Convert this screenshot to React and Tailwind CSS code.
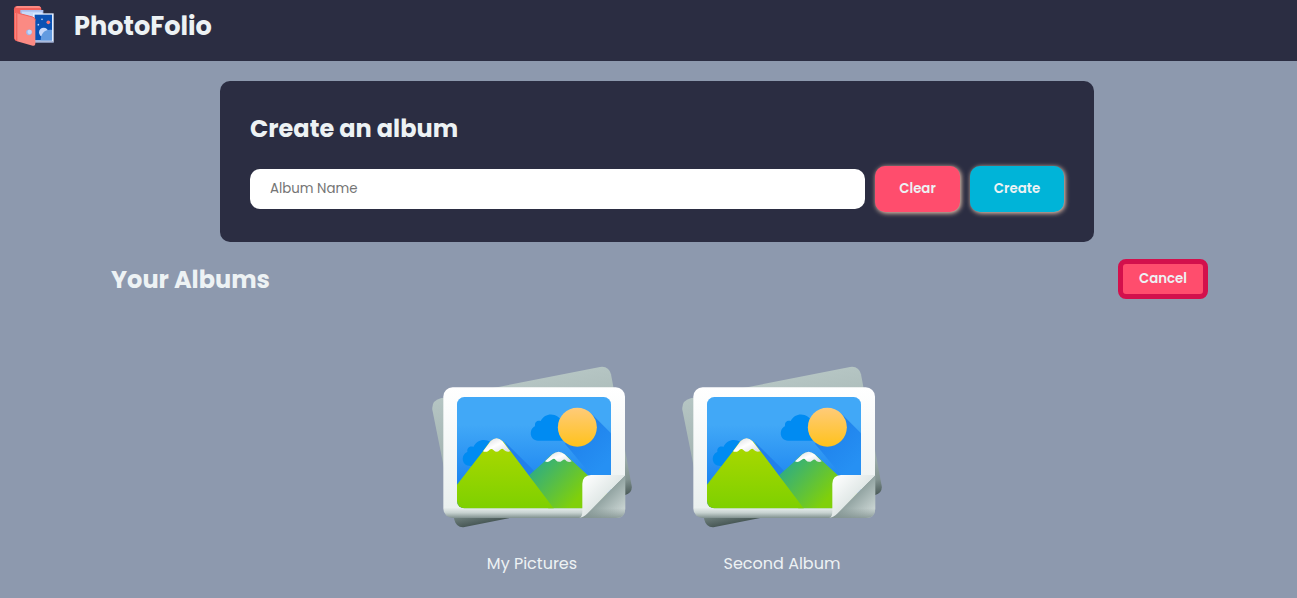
import React from "react";

function LogoIcon() {
  return (
    <svg width="42" height="42" viewBox="0 0 126 126" className="block shrink-0">
      <path d="M13 3h62q10 0 10 11v80H3V14Q3 3 13 3z" fill="#f3605a" />
      <path d="M13 3h62q7 0 9 6H8q2-6 5-6z" fill="#fb8a83" />
      <path d="M22 15h69v80H22z" fill="#a9bfee" />
      <path d="M27 20h60v70H27z" fill="#c7dafa" />
      <path d="M60 25h62v87H60z" fill="#e3eeff" />
      <path d="M60 109h62v4H60z" fill="#8fa0c8" />
      <path d="M65 29h52v77H65z" fill="#0a52b4" />
      <circle cx="92" cy="82" r="14" fill="#c5d8fa" />
      <path d="M83 106c1-23 14-34 34-31v31z" fill="#629be0" />
      <circle cx="106" cy="52" r="5.500" fill="#fa7775" />
      <circle cx="87" cy="43" r="2.500" fill="#c5d8fa" />
      <circle cx="76" cy="59" r="2.500" fill="#c5d8fa" />
      <path d="M4 13q-1 7 13 12l42 11q8 2 8 10v70q0 8-8 6L12 109q-8-3-8-12z" fill="#fb8a83" />
      <path d="M3 14q1 6 10 10v85q-10-3-10-12z" fill="#f3605a" />
      <path d="M8 24v80" stroke="#fb8a83" strokeWidth="3" />
      <path d="M4 14q1 7 13 11l42 11q8 3 8 10" stroke="#f3605a" strokeWidth="3" fill="none" />
      <circle cx="48" cy="82" r="8.500" fill="#9fb7ec" />
      <circle cx="50" cy="81" r="6.500" fill="#c4d8fa" />
    </svg>
  );
}

function AlbumPicture({ id }) {
  const url = (name) => `url(#${name}-${id})`;
  return (
    <svg width="200" height="165" viewBox="36 30 600 495" className="block">
      <defs>
        <linearGradient id={`back-${id}`} gradientUnits="userSpaceOnUse" x1="290" y1="85" x2="365" y2="471">
          <stop offset="0" stopColor="#b5c5c3" />
          <stop offset=".72" stopColor="#9bacaa" />
          <stop offset=".88" stopColor="#829391" />
          <stop offset="1" stopColor="#485856" />
        </linearGradient>
        <linearGradient id={`frame-${id}`} x1="0" y1="0" x2="0" y2="1">
          <stop offset="0" stopColor="#fff" />
          <stop offset=".92" stopColor="#eaf0ef" />
          <stop offset=".96" stopColor="#c7d2d0" />
          <stop offset="1" stopColor="#80918f" />
        </linearGradient>
        <linearGradient id={`sky-${id}`} x1="0" y1="0" x2="0" y2="1">
          <stop offset=".25" stopColor="#41a8f7" />
          <stop offset=".85" stopColor="#1780ef" />
        </linearGradient>
        <linearGradient id={`sun-${id}`} x1="0" y1="0" x2="0" y2="1">
          <stop offset="0" stopColor="#ffcb79" />
          <stop offset="1" stopColor="#ffc21b" />
        </linearGradient>
        <linearGradient id={`near-${id}`} x1="0" y1="0" x2="0" y2="1">
          <stop offset="0" stopColor="#aed900" />
          <stop offset="1" stopColor="#7dd000" />
        </linearGradient>
        <linearGradient id={`far-${id}`} gradientUnits="userSpaceOnUse" x1="350" y1="340" x2="465" y2="440">
          <stop offset="0" stopColor="#35b079" />
          <stop offset="1" stopColor="#80d00a" />
        </linearGradient>
        <linearGradient id={`shade-${id}`} gradientUnits="userSpaceOnUse" x1="465" y1="230" x2="560" y2="325">
          <stop offset="0" stopColor="#1f82ec" />
          <stop offset="1" stopColor="#2690f3" />
        </linearGradient>
        <linearGradient id={`snow-${id}`} x1="0" y1="0" x2="1" y2="1">
          <stop offset="0" stopColor="#d5d8de" />
          <stop offset=".5" stopColor="#fff" />
          <stop offset="1" stopColor="#d9dde1" />
        </linearGradient>
        <linearGradient id={`fold-${id}`} gradientUnits="userSpaceOnUse" x1="490" y1="365" x2="550" y2="425">
          <stop offset="0" stopColor="#fff" />
          <stop offset="1" stopColor="#e1e8e7" />
        </linearGradient>
        <linearGradient id={`under-${id}`} gradientUnits="userSpaceOnUse" x1="548" y1="423" x2="600" y2="475">
          <stop offset="0" stopColor="#8fa19f" />
          <stop offset="1" stopColor="#c9d4d2" />
        </linearGradient>
        <linearGradient id={`edge-${id}`} gradientUnits="userSpaceOnUse" x1="0" y1="460" x2="0" y2="489">
          <stop offset="0" stopColor="#7d8e8c" stopOpacity="0" />
          <stop offset="1" stopColor="#7d8e8c" stopOpacity=".8" />
        </linearGradient>
        <clipPath id={`photo-${id}`}>
          <rect x="111" y="126" width="462" height="334" rx="22" />
        </clipPath>
      </defs>
      <path
        d="M62 130L540 36Q566 32 573 58L635 392Q638 414 616 420L134 516Q110 520 103 494L37 164Q34 137 62 130Z"
        fill={url("back")}
      />
      <rect x="70" y="97" width="545" height="392" rx="28" fill={url("frame")} />
      <g clipPath={url("photo")}>
        <rect x="111" y="126" width="462" height="334" fill={url("sky")} />
        <path d="M513 175L600 262V390H538L435 266Z" fill={url("shade")} />
        <path
          d="M354 257C328 257 326 222 345 214C343 198 355 195 362 198C377 168 418 174 428 205V257Z"
          fill="#008bf2"
        />
        <path
          d="M152 333C123 333 122 298 142 291C140 275 153 273 160 276C174 245 216 249 226 282V333Z"
          fill="#008bf2"
        />
        <circle cx="472" cy="217" r="58.5" fill={url("sun")} />
        <path d="M254 260L345 350L330 365L270 290Z" fill="#2180eb" />
        <path d="M328 360L375 318L390 302Q415 280 440 302L570 422V470H390Z" fill={url("far")} />
        <path
          d="M375 319L397 298Q416 283 434 298L455 319Q448 324 439 318Q435 309 426 317Q416 325 407 315Q402 307 393 316Q384 324 375 319Z"
          fill={url("snow")}
        />
        <path d="M105 397L190 287L209 261Q230 240 251 261L404 464H105Z" fill={url("near")} />
        <path
          d="M189 289L212 258Q230 242 247 258L271 289Q260 293 253 286Q247 277 239 286Q230 295 221 286Q213 277 206 287Q198 293 189 289Z"
          fill={url("snow")}
        />
      </g>
      <path d="M486 489L616 360V462Q615 489 588 489Z" fill={url("under")} />
      <path d="M486 489L616 360V462Q615 489 588 489Z" fill={url("edge")} />
      <path d="M478 488Q487 487 487 470V386Q488 361 513 360H615L503 475Q488 489 478 488Z" fill={url("fold")} />
    </svg>
  );
}

function Album({ id, name }) {
  return (
    <div className="flex w-[250px] flex-col items-center">
      <AlbumPicture id={id} />
      <p className="mt-[22px] whitespace-nowrap text-base leading-6">{name}</p>
    </div>
  );
}

export default function App() {
  return (
    <div className="flex h-[598px] flex-col overflow-hidden bg-[#8d99ae] font-[Poppins,Inter,sans-serif] text-[#edf2f4]">
      <header className="flex h-[61px] shrink-0 items-start bg-[#2b2d42] pl-[13px] pt-[5px]">
        <LogoIcon />
        <h1 className="ml-[19px] mt-0.5 text-[25.6px] font-bold leading-[38px]">PhotoFolio</h1>
      </header>
      <main className="flex flex-col">
        <section className="ml-[220px] mt-5 h-[161px] w-[874px] rounded-[10px] bg-[#2b2d42] pl-[30px] pt-[30px]">
          <h2 className="text-2xl font-bold leading-9">Create an album</h2>
          <form className="mt-[19px] flex items-center">
            <input
              className="h-10 w-[615px] shrink-0 rounded-[10px] bg-white px-5 text-[13.333px] text-black placeholder:text-[#757575]"
              placeholder="Album Name"
            />
            <button
              type="button"
              className="ml-2.5 h-[46px] w-[85px] shrink-0 rounded-[10px] bg-[#ff4d6d] text-[13.333px] font-semibold shadow-[1px_1px_5px_#ffd6ba]"
            >
              Clear
            </button>
            <button
              type="button"
              className="ml-[10px] h-[46px] w-[94px] shrink-0 rounded-[10px] bg-[#00b4d8] text-[13.333px] font-semibold shadow-[1px_1px_5px_#ffd6ba]"
            >
              Create
            </button>
          </form>
        </section>
        <div className="ml-[111px] mt-[17px] flex h-10 w-[1097px] items-center justify-between">
          <h2 className="pt-0.5 text-2xl font-bold leading-9">Your Albums</h2>
          <button
            type="button"
            className="h-10 w-[90px] rounded-lg border-[5px] border-[#d3104c] bg-[#ff4d6d] text-[13.333px] font-semibold"
          >
            Cancel
          </button>
        </div>
        <div className="ml-[407px] mt-[66px] flex">
          <Album id="first" name="My Pictures" />
          <Album id="second" name="Second Album" />
        </div>
      </main>
    </div>
  );
}
